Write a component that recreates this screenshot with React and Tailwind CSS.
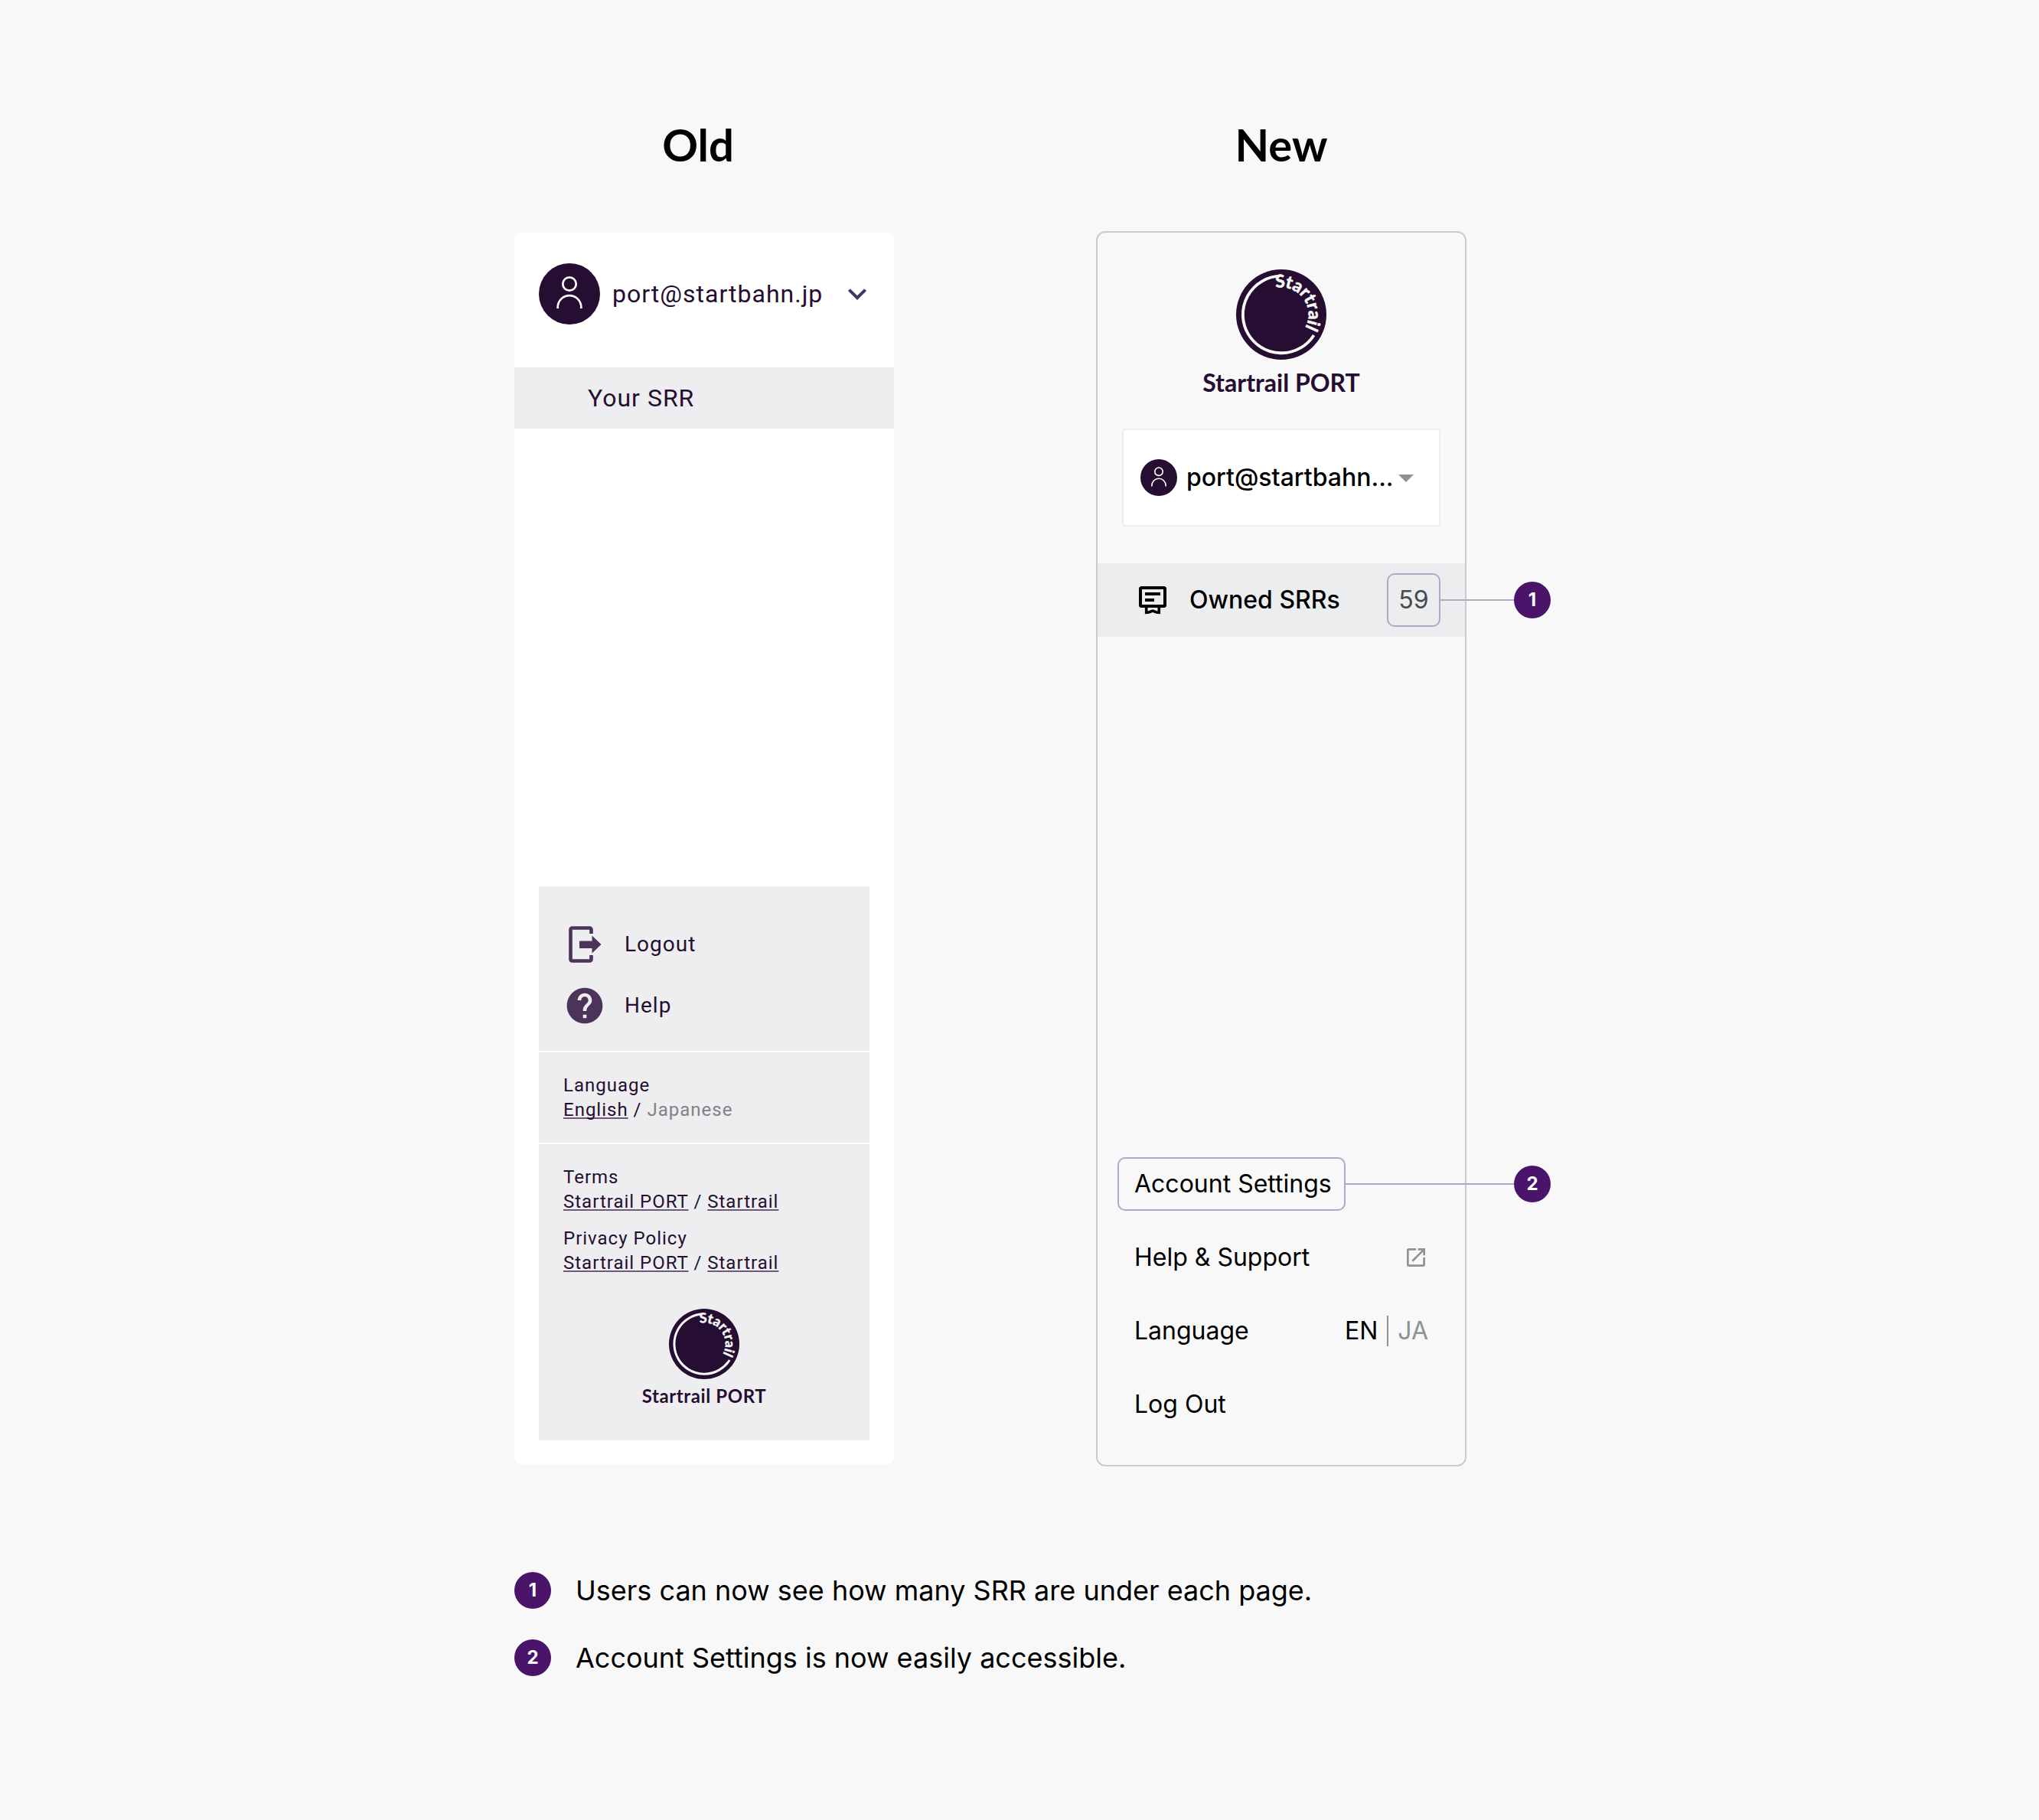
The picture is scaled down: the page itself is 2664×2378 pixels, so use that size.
import { MdExpandMore, MdArrowDropDown, MdHelp, MdOpenInNew } from 'react-icons/md';

const notes = [
  'Users can now see how many SRR are under each page.',
  'Account Settings is now easily accessible.',
];

const underlined = 'underline decoration-[#6d5a78] decoration-2 underline-offset-2 [text-decoration-skip-ink:none]';

function Avatar({ className }) {
  return (
    <svg className={className} viewBox="0 0 80 80" fill="none" aria-hidden="true">
      <circle cx="40" cy="40" r="40" fill="#250e31" />
      <circle cx="40" cy="27" r="8.7" stroke="#fff" strokeWidth="2.7" />
      <path d="M24.7 59v-1.6a15.3 15.3 0 0 1 30.6 0V59" stroke="#fff" strokeWidth="2.7" />
    </svg>
  );
}

function LogoMark({ id, className }) {
  return (
    <svg className={className} viewBox="0 0 118 118" fill="none" aria-hidden="true">
      <circle cx="59" cy="59" r="59" fill="#250e31" />
      <path d="M101.600 86A50.3 50.3 0 1 1 57 8.7" stroke="#f8f8f8" strokeWidth="3.8" />
      <path id={id} d="M51.500 24.300A35.500 35.500 0 1 1 50 93.300" />
      <text className="font-[Lato] text-[23px] font-bold" fill="#f8f8f8" stroke="#f8f8f8" strokeWidth="0.6">
        <textPath href={`#${id}`}>Startrail</textPath>
      </text>
    </svg>
  );
}

function LogoutIcon() {
  return (
    <svg className="h-14 w-14" viewBox="0 0 56 56" fill="none" aria-hidden="true">
      <path d="M36.500 14V8.500a2 2 0 0 0-2-2H11.500a2 2 0 0 0-2 2v39a2 2 0 0 0 2 2h23a2 2 0 0 0 2-2V42" stroke="#4c335a" strokeWidth="4.6" />
      <path d="M21 23.500h16.500V16.500L49.500 28 37.500 39.500v-6.500H21z" fill="#4c335a" />
    </svg>
  );
}

function RecordIcon() {
  return (
    <svg className="h-12 w-12" viewBox="0 0 48 48" fill="none" aria-hidden="true">
      <rect x="8" y="8" width="32" height="24" rx="1.5" stroke="#000" strokeWidth="4" />
      <path d="M14 16h20M14 24h12" stroke="#000" strokeWidth="4" />
      <path d="M15.700 33v7.300l3.300-.3 5-1.900 5 1.900 3.300.3V33" stroke="#000" strokeWidth="3.6" />
    </svg>
  );
}

function Marker({ n }) {
  return (
    <span className="flex h-12 w-12 shrink-0 items-center justify-center rounded-full bg-[#4a146a] text-2xl font-bold text-white">
      {n}
    </span>
  );
}

// leader line from a highlighted control out to its number
function Callout({ n, line }) {
  return (
    <span className="pointer-events-none absolute inset-y-0 left-full flex items-center">
      <span className={`h-0.5 bg-[#b8a4c6] ${line}`} />
      <Marker n={n} />
    </span>
  );
}

function LegalLinks({ title }) {
  return (
    <div>
      <p>{title}</p>
      <p>
        <a href="#port" className={underlined}>Startrail PORT</a>
        {' / '}
        <a href="#startrail" className={underlined}>Startrail</a>
      </p>
    </div>
  );
}

function OldMenu() {
  return (
    <nav className="my-0.5 flex min-h-[1610px] w-[496px] flex-col rounded-[10px] bg-white pt-10 pb-8 font-[Roboto] tracking-[1px] text-[#250e31]">
      <button className="flex items-center px-8 text-left text-[32px] tracking-[1px]">
        <Avatar className="h-20 w-20" />
        <span className="ml-4 flex-1">port@startbahn.jp</span>
        <MdExpandMore className="-mr-2 h-12 w-12 text-[#4c335a]" />
      </button>

      <a href="#srr" className="mt-14 bg-[#eeeef0] pl-24 text-[32px] leading-[80px]">Your SRR</a>

      <div className="mx-8 mt-auto divide-y-2 divide-white bg-[#eeeef0]">
        <div className="px-8 pt-12 pb-[31px] text-[28px]">
          <button className="flex h-14 items-center gap-6 tracking-[1px]">
            <LogoutIcon />
            Logout
          </button>
          <button className="mt-6 flex h-14 items-center gap-6 tracking-[1px]">
            <MdHelp className="h-14 w-14 text-[#4c335a]" />
            Help
          </button>
        </div>

        <div className="px-8 py-[27px] text-2xl">
          <p>Language</p>
          <p>
            <a href="#en" className={underlined}>English</a>
            {' / '}
            <a href="#ja" className="text-[#808287]">Japanese</a>
          </p>
        </div>

        <div className="px-8 pt-[27px] pb-10.5 text-2xl">
          <div className="flex flex-col gap-4">
            <LegalLinks title="Terms" />
            <LegalLinks title="Privacy Policy" />
          </div>
          <div className="mt-11 flex flex-col items-center tracking-wide">
            <LogoMark id="old-mark" className="h-23 w-23 tracking-normal" />
            <span className="mt-1.5 font-[Lato] text-2xl font-bold">Startrail PORT</span>
          </div>
        </div>
      </div>
    </nav>
  );
}

function NewMenu() {
  return (
    <nav className="flex min-h-[1614px] w-[484px] flex-col rounded-xl border-2 border-[#c8cccf] pt-12 pb-[31px] text-[32px]">
      <div className="flex flex-col items-center text-[#250e31]">
        <LogoMark id="new-mark" className="h-[118px] w-[118px]" />
        <span className="mt-2.5 font-[Lato] text-[32px] leading-10 font-bold">Startrail PORT</span>
      </div>

      <button className="mx-8 mt-10 flex h-32 items-center rounded border-2 border-[#eeeeee] bg-white pl-[22px] font-medium">
        <Avatar className="h-12 w-12" />
        <span className="ml-3">port@startbahn...</span>
        <MdArrowDropDown className="-ml-2 h-12 w-12 text-[#8c9296]" />
      </button>

      <a href="#owned" className="mt-12 flex h-24 items-center bg-[#ecedef] pr-8 pl-12 font-medium">
        <RecordIcon />
        <span className="ml-6 flex-1">Owned SRRs</span>
        <span className="relative flex h-[70px] w-[70px] items-center justify-center rounded-[10px] border-2 border-[#b8a4c6] font-normal text-[#48494b]">
          59
          <Callout n={1} line="w-[98px]" />
        </span>
      </a>

      <div className="mt-auto flex flex-col pr-12 pl-[26px] leading-[96px]">
        <div className="flex h-24 items-center">
          <button className="relative h-[70px] w-[298px] rounded-[10px] border-2 border-[#b8a4c6] pl-5 text-left leading-[66px] whitespace-nowrap">
            Account Settings
            <Callout n={2} line="w-[222px]" />
          </button>
        </div>
        <a href="#help" className="flex items-center justify-between pl-[22px]">
          Help &amp; Support
          <MdOpenInNew className="h-8 w-8 text-[#8c9296]" />
        </a>
        <div className="flex items-center justify-between pl-[22px]">
          Language
          <span className="flex items-center gap-3">
            <button>EN</button>
            <span className="h-10 w-0.5 bg-[#8c9296]" />
            <button className="text-[#8c9296]">JA</button>
          </span>
        </div>
        <button className="pl-[22px] text-left">Log Out</button>
      </div>
    </nav>
  );
}

export default function App() {
  return (
    <main className="min-h-screen bg-[#f8f8f8] pt-38 pb-47 font-[Inter] text-black">
      <div className="mx-auto w-full max-w-[1320px]">
        <div className="flex gap-66">
          <section className="flex w-[496px] flex-col gap-19">
            <h2 className="mr-4 text-center font-[Lato] text-[58px] leading-[74px] font-bold">Old</h2>
            <OldMenu />
          </section>
          <section className="flex w-[484px] flex-col gap-19">
            <h2 className="text-center font-[Lato] text-[58px] leading-[74px] font-bold">New</h2>
            <NewMenu />
          </section>
        </div>

        <ol className="mt-[138px] flex flex-col gap-10">
          {notes.map((note, i) => (
            <li key={note} className="flex items-center gap-8">
              <Marker n={i + 1} />
              <span className="text-4xl">{note}</span>
            </li>
          ))}
        </ol>
      </div>
    </main>
  );
}
